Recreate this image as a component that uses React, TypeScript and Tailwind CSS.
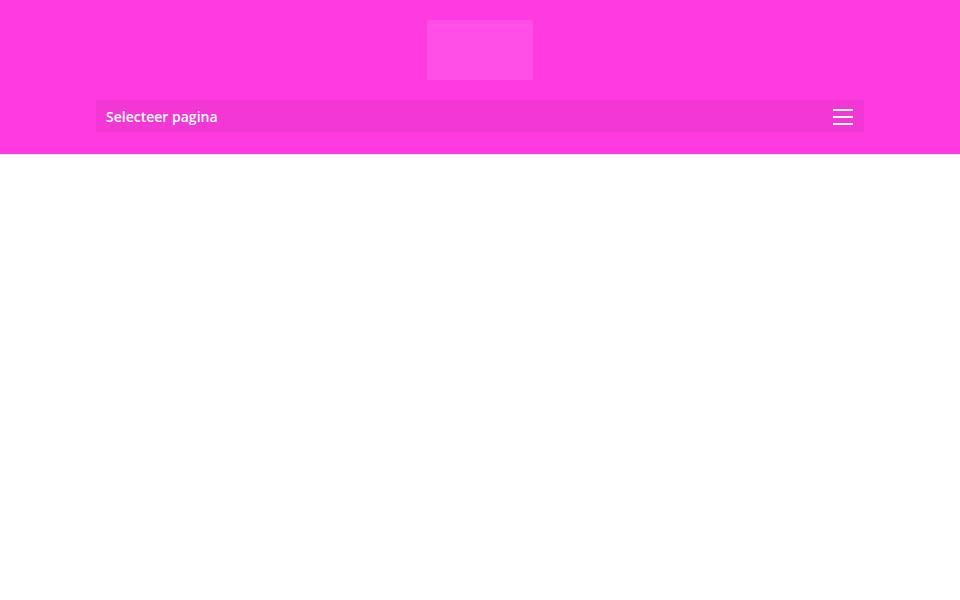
import React from 'react';

export default function App() {
  return (
    <div className="min-h-[600px] bg-white" style={{ fontFamily: '"Open Sans", sans-serif' }}>
      <header className="bg-[#ff3ae0] h-[154px] shadow-[0_1px_0_rgba(0,0,0,0.1)]">
        <div className="flex justify-center pt-5">
          <div className="w-[106px] h-[60px] bg-[#ff4fe6]" />
        </div>
        <div className="mx-auto mt-5 w-[768px] h-8 bg-black/5 flex items-center justify-between pl-[10px] pr-[11px] pt-[2px]">
          <span className="text-white font-semibold text-sm">Selecteer pagina</span>
          <div className="flex flex-col gap-[5px]">
            <span className="block w-5 h-[2px] bg-white" />
            <span className="block w-5 h-[2px] bg-white" />
            <span className="block w-5 h-[2px] bg-white" />
          </div>
        </div>
      </header>
    </div>
  );
}
